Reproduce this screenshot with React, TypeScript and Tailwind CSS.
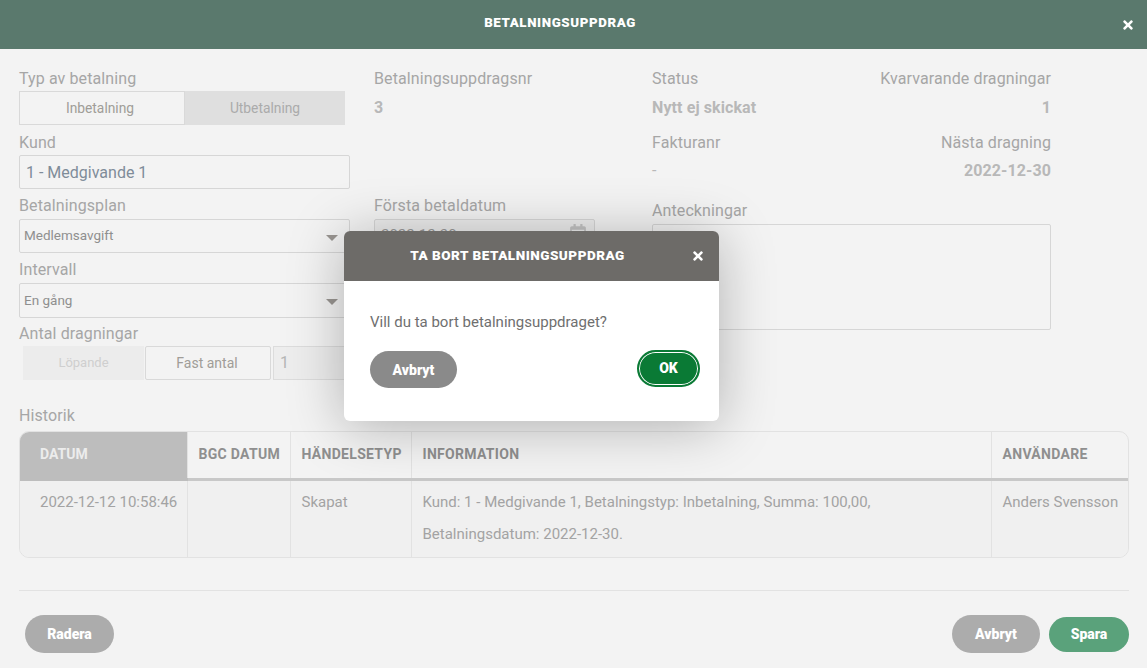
import { FaTimes, FaRegCalendarAlt } from "react-icons/fa";

const Label = ({ children, className = "" }: { children: React.ReactNode; className?: string }) => (
  <div className={`text-[16px] leading-[20px] tracking-[0.1px] text-[#a6a6a6] ${className}`}>{children}</div>
);

const Value = ({ children, className = "" }: { children: React.ReactNode; className?: string }) => (
  <div className={`text-[16px] leading-[20px] font-bold tracking-[0.1px] text-[#b8b8b8] ${className}`}>{children}</div>
);

const Select = ({ value }: { value: string }) => (
  <div className="flex h-[35px] w-full items-center justify-between rounded-[2px] border border-[#d6d6d6] pl-[4px] pr-[11px] text-[13.5px] text-[#8f8f8f]">
    <span className="pb-[2px]">{value}</span>
    <svg width="12" height="6" viewBox="0 0 12 6" className="mt-[3px]">
      <path d="M0 0H12L6 6Z" fill="#9a9692" />
    </svg>
  </div>
);

const Pill = ({ children, className }: { children: React.ReactNode; className: string }) => (
  <div className={`flex items-center justify-center rounded-full text-[14px] font-black text-white ${className}`}>
    {children}
  </div>
);

const th = "border-l border-[#e2e2e2] border-b-[3px] border-b-[#c8c8c8] pl-[11px] pr-[9px] text-left text-[14px] font-bold tracking-[0.3px] text-[#8f8f8f]";
const td = "border-l border-[#e2e2e2] align-top pl-[11px] pr-[9px] pt-[5px] text-[15px] leading-[32px] text-[#a3a3a3]";

export default function App() {
  return (
    <div className="relative flex h-[668px] w-[1147px] flex-col overflow-hidden bg-[#f3f3f3] font-['Roboto',sans-serif]">
      <header className="flex h-[49px] shrink-0 items-center bg-[#5a796d] text-white">
        <div className="flex-1 pb-[3px] text-center text-[13.3px] font-black tracking-[0.6px]">BETALNINGSUPPDRAG</div>
        <div className="flex w-[27px] justify-start pl-[1px]">
          <FaTimes className="text-[14px]" />
        </div>
      </header>

      <main className="flex flex-1 flex-col pl-[19px] pr-[18px]">
        <div className="flex h-[331px] shrink-0">
          <section className="flex w-[331px] flex-col">
            <Label className="mt-[20px] mb-[2px]">Typ av betalning</Label>
            <div className="flex h-[34px] text-[13.8px]">
              <div className="flex w-[166px] items-center justify-center border border-[#d9d9d9] pr-[4px] text-[#a09d98]">Inbetalning</div>
              <div className="flex w-[160px] items-center justify-center bg-[#dfdfdf] text-[#ababab]">Utbetalning</div>
            </div>
            <Label className="mt-[8px] mb-[2px]">Kund</Label>
            <div className="flex h-[34px] items-center rounded-[2px] border border-[#d6d6d6] pl-[6px] pt-[2px] text-[16px] text-[#7f8c99]">1 - Medgivande 1</div>
            <Label className="mt-[7px] mb-[3px]">Betalningsplan</Label>
            <Select value="Medlemsavgift" />
            <Label className="mt-[7px] mb-[3px]">Intervall</Label>
            <Select value="En gång" />
            <Label className="mt-[6px] mb-[2px]">Antal dragningar</Label>
            <div className="flex h-[34px] pl-[4px] text-[14px]">
              <div className="flex w-[121px] items-center justify-center bg-[#ececec] text-[13px] text-[#cfcfcf]">Löpande</div>
              <div className="ml-[1px] flex w-[126px] items-center justify-center rounded-[2px] border border-[#d9d9d9] pr-[2px] text-[#a09d98]">Fast antal</div>
              <div className="ml-[2px] flex flex-1 items-center border border-[#dcdcdc] bg-[#ededed] pl-[6px] text-[16px] text-[#b5b5b5]">1</div>
            </div>
          </section>

          <section className="ml-[24px] flex w-[221px] flex-col">
            <Label className="mt-[20px]">Betalningsuppdragsnr</Label>
            <Value className="mt-[9px]">3</Value>
            <Label className="mt-[78px] mb-[3px]">Första betaldatum</Label>
            <div className="flex h-[35px] items-start justify-between rounded-[2px] border border-[#d6d6d6] bg-[#ededed] pl-[6px] pr-[7px] pt-[4px] text-[15px] text-[#9a9a9a]">
              <span>2022-12-30</span>
              <FaRegCalendarAlt className="text-[18px] text-[#c4c4c4]" />
            </div>
          </section>

          <section className="ml-[57px] flex w-[399px] flex-col">
            <div className="mt-[20px] flex justify-between">
              <Label>Status</Label>
              <Label>Kvarvarande dragningar</Label>
            </div>
            <div className="mt-[9px] flex justify-between">
              <Value>Nytt ej skickat</Value>
              <Value>1</Value>
            </div>
            <div className="mt-[15px] flex justify-between">
              <Label>Fakturanr</Label>
              <Label>Nästa dragning</Label>
            </div>
            <div className="mt-[8px] flex justify-between">
              <Value className="!font-normal">-</Value>
              <Value>2022-12-30</Value>
            </div>
            <Label className="mt-[20px] mb-[3px]">Anteckningar</Label>
            <div className="h-[106px] rounded-[2px] border border-[#d6d6d6]" />
          </section>
        </div>

        <Label className="mt-[26px] mb-[5px]">Historik</Label>
        <div className="w-[1110px] overflow-hidden rounded-[10px] border border-[#e2e2e2]">
          <table className="w-full table-fixed border-collapse">
            <colgroup>
              <col className="w-[167px]" />
              <col className="w-[103px]" />
              <col className="w-[121px]" />
              <col className="w-[580px]" />
              <col />
            </colgroup>
            <thead>
              <tr className="h-[47px]">
                <th className="border-b-[3px] border-b-[#bdbdbd] bg-[#bdbdbd] pl-[20px] text-left text-[14px] font-bold text-[#ececec]">DATUM</th>
                <th className={th}>BGC DATUM</th>
                <th className={th}>HÄNDELSETYP</th>
                <th className={th}>INFORMATION</th>
                <th className={th}>ANVÄNDARE</th>
              </tr>
            </thead>
            <tbody>
              <tr className="h-[78px] bg-[#f0f0f0]">
                <td className="whitespace-nowrap pl-[20px] pt-[5px] align-top text-[15px] leading-[32px] text-[#a3a3a3]">2022-12-12 10:58:46</td>
                <td className={td} />
                <td className={td}>Skapat</td>
                <td className={td}>
                  Kund: 1 - Medgivande 1, Betalningstyp: Inbetalning, Summa: 100,00,
                  <br />
                  Betalningsdatum: 2022-12-30.
                </td>
                <td className={`${td} whitespace-nowrap`}>Anders Svensson</td>
              </tr>
            </tbody>
          </table>
        </div>

        <div className="mt-[32px] w-[1110px] border-t border-[#e2e2e2]" />
        <div className="mt-[24px] flex w-[1110px] items-center pl-[6px]">
          <Pill className="h-[38px] w-[89px] bg-[#acacac]">Radera</Pill>
          <div className="flex-1" />
          <Pill className="h-[38px] w-[88px] bg-[#acacac]">Avbryt</Pill>
          <Pill className="ml-[9px] h-[35px] w-[80px] bg-[#5aa27b]">Spara</Pill>
        </div>
      </main>

      <div className="absolute left-[344px] top-[231px] h-[190px] w-[375px] rounded-[6px] bg-white shadow-[0_5px_55px_rgba(0,0,0,0.28)]">
        <div className="flex h-[50px] items-center rounded-t-[6px] bg-[#6d6b68] text-white">
          <div className="flex-1 pb-[2px] text-center text-[13.5px] font-black tracking-[0.5px]">TA BORT BETALNINGSUPPDRAG</div>
          <div className="flex w-[28px] justify-start">
            <FaTimes className="text-[14px]" />
          </div>
        </div>
        <div className="px-[26px] pt-[32px] text-[15px] leading-[18px] text-[#6f6f6f]">Vill du ta bort betalningsuppdraget?</div>
        <div className="mt-[20px] flex items-start justify-between pl-[26px] pr-[19px]">
          <Pill className="h-[37px] w-[87px] bg-[#8a8a8a] pt-[2px]">Avbryt</Pill>
          <div className="-mt-[1px] flex h-[37px] w-[63px] items-center justify-center rounded-full border-2 border-[#0a7a35] bg-[#0a7a35] text-[14px] font-black text-white shadow-[inset_0_0_0_1px_#fff]">OK</div>
        </div>
      </div>
    </div>
  );
}
